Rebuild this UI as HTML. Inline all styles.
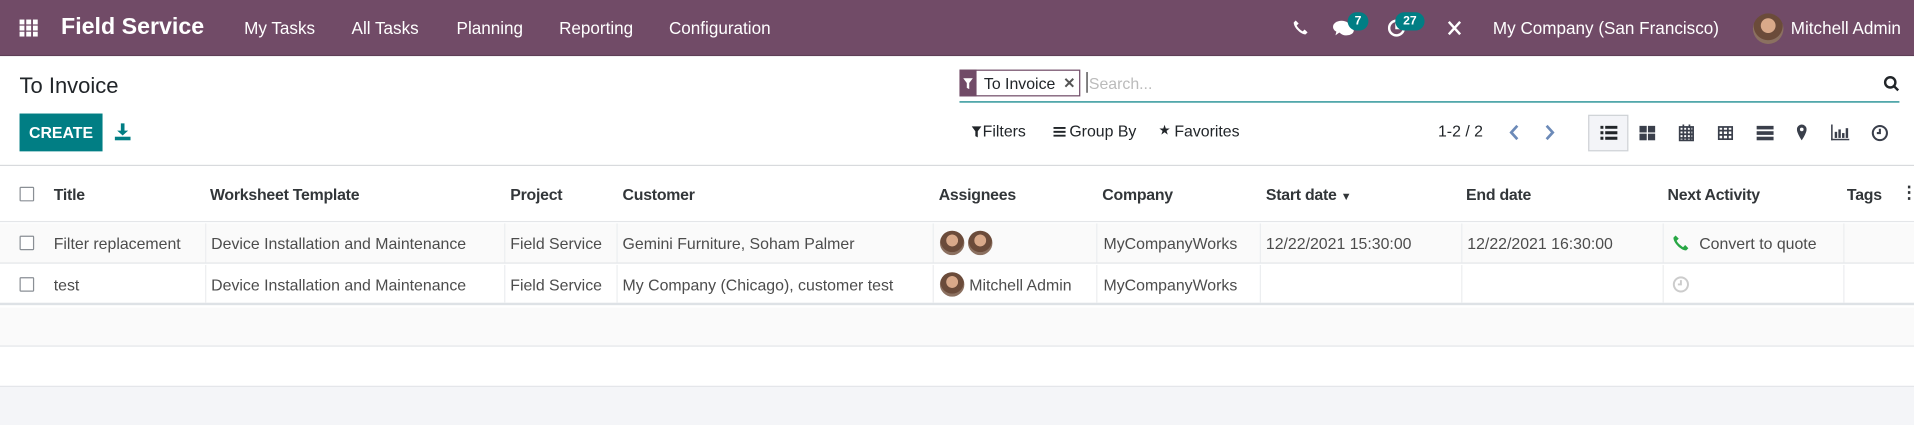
<!DOCTYPE html>
<html><head><meta charset="utf-8">
<style>
*{box-sizing:border-box;margin:0;padding:0}
html,body{width:1914px;height:425px;overflow:hidden;background:#f4f5f8}
#w{position:absolute;left:0;top:0;width:1568px;height:348px;transform:scale(1.2207);transform-origin:0 0;font-family:"Liberation Sans",sans-serif;color:#4c4c4c;font-size:13px;background:#f4f5f8}
.a{position:absolute;white-space:nowrap}
.nav{position:absolute;left:0;top:0;width:1568px;height:46px;background:#714b67;border-bottom:1px solid #5e3e56}
.nav .a{color:#fff;font-size:14px;top:15px}
.cp{position:absolute;left:0;top:46px;width:1568px;height:90px;background:#fff;border-bottom:1px solid #d8dadd}
.tbl{position:absolute;left:0;top:136px;width:1568px;height:181px;background:#fff}
.hd{color:#212529;font-size:13px;font-weight:bold;top:16px;letter-spacing:-0.2px;-webkit-text-stroke:0;opacity:.92}
.cb{position:absolute;left:16px;width:12px;height:12px;border:1px solid #8a8f95;border-radius:1px;background:#fff}
.row .a{top:9px}
.sep{position:absolute;top:0;width:1px;height:100%;background:#eceef0}
.av{position:absolute;width:20px;height:20px;border-radius:50%;background:radial-gradient(circle at 50% 40%,#d9a98a 0 30%,#6b4b3a 32% 60%,#8b7060 62%)}
.badge{position:absolute;background:#017e84;color:#fff;font-size:10px;font-weight:bold;border-radius:8px;height:15px;line-height:15px;text-align:center}
.vi{position:absolute;top:97px;width:33px;height:30px}
</style></head><body><div id="w">

<div class="nav">
  <svg class="a" style="left:16px;top:16px" width="15" height="14" viewBox="0 0 15 14" fill="#fff"><rect x="0" y="0" width="4" height="4"/><rect x="5.5" y="0" width="4" height="4"/><rect x="11" y="0" width="4" height="4"/><rect x="0" y="5" width="4" height="4"/><rect x="5.5" y="5" width="4" height="4"/><rect x="11" y="5" width="4" height="4"/><rect x="0" y="10" width="4" height="4"/><rect x="5.5" y="10" width="4" height="4"/><rect x="11" y="10" width="4" height="4"/></svg>
  <div class="a" style="left:50px;top:12px;font-size:19px;font-weight:bold">Field Service</div>
  <div class="a" style="left:200px">My Tasks</div>
  <div class="a" style="left:288px">All Tasks</div>
  <div class="a" style="left:374px">Planning</div>
  <div class="a" style="left:458px">Reporting</div>
  <div class="a" style="left:548px">Configuration</div>
  <svg class="a" style="left:1059px;top:16px" width="13" height="13" viewBox="0 0 16 16" fill="#fff"><path d="M3 1l3 3-2 2c1 2 3 4 6 6l2-2 3 3-2 2C8 15 1 8 1 3z"/></svg>
  <svg class="a" style="left:1092px;top:16px" width="18" height="15" viewBox="0 0 18 15" fill="#fff"><ellipse cx="7" cy="6" rx="7" ry="5"/><path d="M3 9l-1 4 4-3z"/><ellipse cx="11" cy="9" rx="6" ry="4"/></svg>
  <div class="badge" style="left:1104px;top:10px;width:17px">7</div>
  <svg class="a" style="left:1136px;top:15px" width="16" height="16" viewBox="0 0 16 16" fill="none" stroke="#fff" stroke-width="2"><circle cx="8" cy="8" r="6"/><path d="M8 4v4h3"/></svg>
  <div class="badge" style="left:1143px;top:10px;width:24px">27</div>
  <svg class="a" style="left:1185px;top:16px" width="13" height="14" viewBox="0 0 14 15" stroke="#fff" stroke-width="2.2"><path d="M2 2l10 11M12 2L2 13"/></svg>
  <div class="a" style="left:1223px">My Company (San Francisco)</div>
  <div class="av" style="left:1436px;top:11px;width:25px;height:25px"></div>
  <div class="a" style="left:1467px">Mitchell Admin</div>
</div>

<div class="cp">
  <div class="a" style="left:16px;top:14px;font-size:18px;color:#212529">To Invoice</div>
  <div class="a" style="left:16px;top:47px;width:68px;height:31px;background:#017e84;color:#fff;font-weight:bold;font-size:13px;line-height:31px;text-align:center">CREATE</div>
  <svg class="a" style="left:94px;top:55px" width="13" height="14" viewBox="0 0 13 14" fill="#017e84"><path d="M5 0h3v6h3l-4.5 4L2 6h3z"/><rect x="0" y="11" width="13" height="3"/></svg>
  <div class="a" style="left:786px;top:37px;width:770px;height:1px;background:#017e84"></div>
  <div class="a" style="left:786px;top:11px;width:99px;height:22px;border:1px solid #714b67;background:#fff"></div>
  <div class="a" style="left:786px;top:11px;width:14px;height:22px;background:#714b67"></div>
  <svg class="a" style="left:789px;top:18px" width="8" height="9" viewBox="0 0 8 9" fill="#fff"><path d="M0 0h8L5 4v5L3 8V4z"/></svg>
  <div class="a" style="left:806px;top:15px;font-size:13px;color:#212529">To Invoice</div>
  <div class="a" style="left:871px;top:15px;font-size:12px;color:#555;font-weight:bold">✕</div>
  <div class="a" style="left:890px;top:13px;width:1px;height:17px;background:#333"></div>
  <div class="a" style="left:892px;top:15px;color:#bbb;font-size:13px">Search...</div>
  <svg class="a" style="left:1543px;top:16px" width="13" height="13" viewBox="0 0 13 13" fill="none" stroke="#212529" stroke-width="2"><circle cx="5.5" cy="5.5" r="4.2"/><path d="M8.5 8.5L12 12"/></svg>
  <svg class="a" style="left:796px;top:57px" width="8" height="10" viewBox="0 0 8 9" fill="#212529"><path d="M0 0h8L5 4v5L3 8V4z"/></svg>
  <div class="a" style="left:805px;top:54px;color:#212529">Filters</div>
  <svg class="a" style="left:863px;top:58px" width="10" height="8" viewBox="0 0 10 8" fill="#212529"><rect y="0" width="10" height="1.6"/><rect y="3.2" width="10" height="1.6"/><rect y="6.4" width="10" height="1.6"/></svg>
  <div class="a" style="left:876px;top:54px;color:#212529">Group By</div>
  <div class="a" style="left:949px;top:54px;color:#212529;font-size:11px">★</div>
  <div class="a" style="left:962px;top:54px;color:#212529">Favorites</div>
  <div class="a" style="left:1178px;top:54px;color:#212529">1-2 / 2</div>
  <svg class="a" style="left:1236px;top:56px" width="10" height="13" viewBox="0 0 10 13" fill="none" stroke="#6c8ab8" stroke-width="2.2"><path d="M7 1L2 6.5 7 12"/></svg>
  <svg class="a" style="left:1264px;top:56px" width="10" height="13" viewBox="0 0 10 13" fill="none" stroke="#6c8ab8" stroke-width="2.2"><path d="M3 1l5 5.5L3 12"/></svg>
</div>
<div class="vi" style="left:1301px;top:94px;background:#f3f4f8;border:1px solid #cfd2d6"></div>
<svg class="a" style="left:1311px;top:103px" width="14" height="12" viewBox="0 0 14 12" fill="#212529"><rect x="0" y="0" width="2.5" height="2.5"/><rect x="4" y="0" width="10" height="2.5"/><rect x="0" y="4.5" width="2.5" height="2.5"/><rect x="4" y="4.5" width="10" height="2.5"/><rect x="0" y="9" width="2.5" height="2.5"/><rect x="4" y="9" width="10" height="2.5"/></svg>
<svg class="a" style="left:1343px;top:103px" width="13" height="12" viewBox="0 0 13 12" fill="#3a3f4b"><rect x="0" y="0" width="6" height="5.5"/><rect x="7" y="0" width="6" height="5.5"/><rect x="0" y="6.5" width="6" height="5.5"/><rect x="7" y="6.5" width="6" height="5.5"/></svg>
<svg class="a" style="left:1375px;top:101px" width="13" height="15" viewBox="0 0 13 15" fill="none" stroke="#3a3f4b" stroke-width="1.4"><rect x="1" y="3" width="11" height="11"/><path d="M1 6h11M4 3v11M7 3v11M10 3v11M1 9h11M1 12h11M4 1v3M9 1v3"/></svg>
<svg class="a" style="left:1407px;top:103px" width="13" height="12" viewBox="0 0 13 12" fill="none" stroke="#3a3f4b" stroke-width="1.4"><rect x="1" y="1" width="11" height="10"/><path d="M1 4h11M1 7.5h11M4.5 1v10M8.5 1v10"/></svg>
<svg class="a" style="left:1439px;top:103px" width="14" height="12" viewBox="0 0 14 12" fill="#3a3f4b"><rect x="0" y="0" width="14" height="3"/><rect x="0" y="4.5" width="14" height="3"/><rect x="0" y="9" width="14" height="3"/></svg>
<svg class="a" style="left:1472px;top:102px" width="8" height="13" viewBox="0 0 8 13" fill="#3a3f4b"><path d="M4 0a4 4 0 014 4c0 3-4 9-4 9S0 7 0 4a4 4 0 014-4zm0 2.5a1.5 1.5 0 100 3 1.5 1.5 0 000-3z"/></svg>
<svg class="a" style="left:1500px;top:102px" width="15" height="13" viewBox="0 0 15 13" fill="#3a3f4b"><rect x="0" y="0" width="1.3" height="13"/><rect x="0" y="11.7" width="15" height="1.3"/><rect x="3" y="6" width="2" height="5"/><rect x="6" y="4" width="2" height="7"/><rect x="9" y="7" width="2" height="4"/><rect x="12" y="3" width="2" height="8"/></svg>
<svg class="a" style="left:1533px;top:102px" width="14" height="14" viewBox="0 0 14 14" fill="none" stroke="#3a3f4b" stroke-width="1.7"><circle cx="7" cy="7" r="5.8"/><path d="M7 3.5V7H4.5"/></svg>

<div class="tbl">
  <div class="a" style="left:0;top:0;width:1568px;height:46px;background:#fff;border-bottom:1px solid #e4e6e9"></div>
  <div class="cb" style="top:17px"></div>
  <div class="a hd" style="left:44px">Title</div>
  <div class="a hd" style="left:172px">Worksheet Template</div>
  <div class="a hd" style="left:418px">Project</div>
  <div class="a hd" style="left:510px">Customer</div>
  <div class="a hd" style="left:769px">Assignees</div>
  <div class="a hd" style="left:903px">Company</div>
  <div class="a hd" style="left:1037px">Start date <span style="font-size:9px">▼</span></div>
  <div class="a hd" style="left:1201px">End date</div>
  <div class="a hd" style="left:1366px">Next Activity</div>
  <div class="a hd" style="left:1513px">Tags</div>
  <div class="a hd" style="left:1557px;top:13px;font-size:14px">⋮</div>

  <div class="row a" style="left:0;top:47px;width:1568px;height:33px;background:#fafafa;border-bottom:1px solid #e4e6e9">
    <div class="sep" style="left:168px"></div><div class="sep" style="left:413px"></div><div class="sep" style="left:505px"></div><div class="sep" style="left:764px"></div><div class="sep" style="left:898px"></div><div class="sep" style="left:1032px"></div><div class="sep" style="left:1197px"></div><div class="sep" style="left:1362px"></div><div class="sep" style="left:1510px"></div>
    <div class="cb" style="top:10px"></div>
    <div class="a" style="left:44px">Filter replacement</div>
    <div class="a" style="left:173px">Device Installation and Maintenance</div>
    <div class="a" style="left:418px">Field Service</div>
    <div class="a" style="left:510px">Gemini Furniture, Soham Palmer</div>
    <div class="av" style="left:770px;top:6px"></div><div class="av" style="left:793px;top:6px"></div>
    <div class="a" style="left:904px">MyCompanyWorks</div>
    <div class="a" style="left:1037px">12/22/2021 15:30:00</div>
    <div class="a" style="left:1202px">12/22/2021 16:30:00</div>
    <svg class="a" style="left:1370px;top:9px" width="14" height="14" viewBox="0 0 16 16" fill="#28a745"><path d="M3 1l3 3-2 2c1 2 3 4 6 6l2-2 3 3-2 2C8 15 1 8 1 3z"/></svg>
    <div class="a" style="left:1392px">Convert to quote</div>
  </div>
  <div class="row a" style="left:0;top:81px;width:1568px;height:33px;background:#fff;border-bottom:2px solid #dee2e6">
    <div class="sep" style="left:168px"></div><div class="sep" style="left:413px"></div><div class="sep" style="left:505px"></div><div class="sep" style="left:764px"></div><div class="sep" style="left:898px"></div><div class="sep" style="left:1032px"></div><div class="sep" style="left:1197px"></div><div class="sep" style="left:1362px"></div><div class="sep" style="left:1510px"></div>
    <div class="cb" style="top:10px"></div>
    <div class="a" style="left:44px">test</div>
    <div class="a" style="left:173px">Device Installation and Maintenance</div>
    <div class="a" style="left:418px">Field Service</div>
    <div class="a" style="left:510px">My Company (Chicago), customer test</div>
    <div class="av" style="left:770px;top:6px"></div>
    <div class="a" style="left:794px">Mitchell Admin</div>
    <div class="a" style="left:904px">MyCompanyWorks</div>
    <svg class="a" style="left:1370px;top:9px" width="14" height="14" viewBox="0 0 14 14" fill="none" stroke="#ccc" stroke-width="1.6"><circle cx="7" cy="7" r="5.8"/><path d="M7 3.5V7H4.5"/></svg>
  </div>
  <div class="a" style="left:0;top:116px;width:1568px;height:32px;background:#fafafa;border-bottom:1px solid #e4e6e9"></div>
  <div class="a" style="left:0;top:149px;width:1568px;height:32px;background:#fff;border-bottom:1px solid #e4e6e9"></div>
</div>
</div></body></html>
